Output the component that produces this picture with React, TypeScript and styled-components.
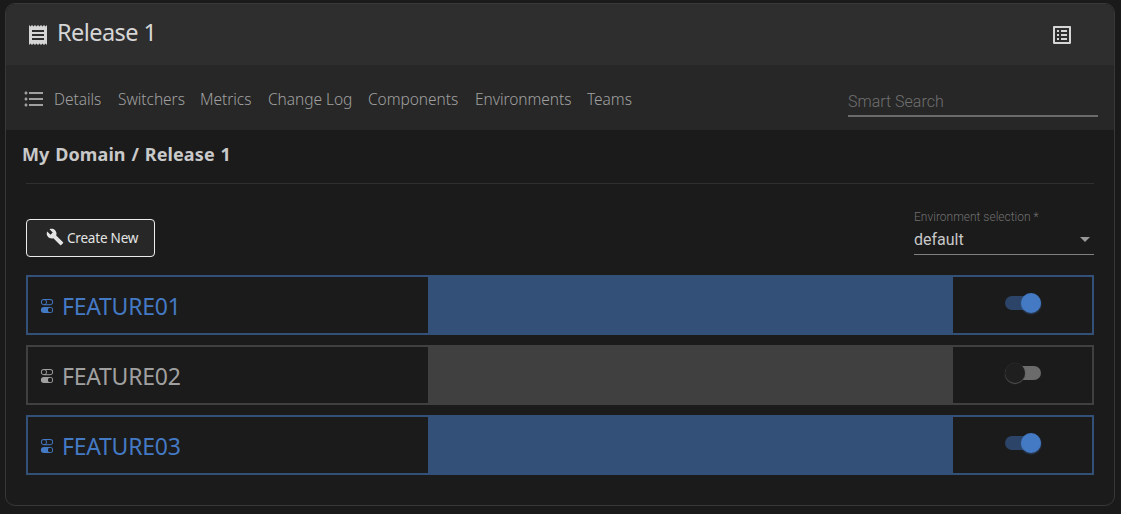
import React, { useState } from "react";
import styled, { createGlobalStyle } from "styled-components";
import { MdBuild, MdFormatListBulleted, MdListAlt, MdReceipt } from "react-icons/md";
import { BsToggles } from "react-icons/bs";

const GlobalStyle = createGlobalStyle`
  * { box-sizing: border-box; }
  body {
    margin: 0;
    background: #1a1a1a;
    font-family: "Segoe UI", "Noto Sans", "Open Sans", sans-serif;
    overflow: hidden;
  }
`;

const Card = styled.main`
  width: 1110px;
  height: 503px;
  margin: 3px 0 0 5px;
  border: 1px solid #383838;
  border-radius: 10px;
  background: #1b1b1b;
  overflow: hidden;
`;

const Header = styled.header`
  display: flex;
  align-items: center;
  height: 61px;
  padding: 1px 40px 0 20px;
  background: #2e2e2e;
  color: #d6d6d6;
  svg { display: block; }
`;

const Title = styled.h1`
  flex: 1;
  margin: 0 0 7px 7px;
  font-size: 23.5px;
  line-height: 32px;
  font-weight: 400;
  letter-spacing: -0.55px;
`;

const NavBar = styled.nav`
  display: flex;
  align-items: center;
  height: 65px;
  padding: 1px 16px 0 16px;
  background: #272727;
  color: #a0a0a0;
  svg { margin-top: 1px; }
`;

const Links = styled.div`
  display: flex;
  flex: 1;
  margin-left: 8px;
  padding-top: 1px;
`;

const NavLink = styled.a<{ $width: number }>`
  width: ${(p) => p.$width}px;
  font-size: 15.5px;
  line-height: 24px;
  font-weight: 300;
  letter-spacing: -0.05px;
  white-space: nowrap;
`;

const Search = styled.input`
  width: 250px;
  height: 32px;
  margin-top: 6px;
  padding: 3px 0 0;
  border: 0;
  border-bottom: 2px solid #6b6b6b;
  outline: 0;
  background: transparent;
  color: #ccc;
  font: 300 16px Roboto, sans-serif;
  &::placeholder { color: #707070; opacity: 1; }
`;

const Breadcrumb = styled.h2`
  height: 54px;
  margin: 0 20px;
  padding-top: 11px;
  border-bottom: 1px solid #303030;
  color: #c9c9c9;
  font-size: 18px;
  line-height: 26px;
  font-weight: 700;
  letter-spacing: 0.1px;
  word-spacing: 1px;
  text-indent: -4px;
`;

const Toolbar = styled.div`
  display: flex;
  justify-content: space-between;
  height: 91px;
  padding: 26px 20px 0;
`;

const CreateButton = styled.button`
  display: flex;
  align-items: center;
  width: 129px;
  height: 38px;
  margin-top: 9px;
  padding: 0 0 0 19px;
  border: 1px solid #ececec;
  border-radius: 4px;
  background: #272727;
  color: #e4e4e4;
  font-family: inherit;
  font-size: 13.5px;
  font-weight: 400;
  letter-spacing: -0.2px;
  white-space: nowrap;
  svg { margin: -3px 3px 0 0; }
`;

const Field = styled.label`
  display: flex;
  flex-direction: column;
  width: 180px;
  height: 45px;
  border-bottom: 1px solid #808080;
  font-family: Roboto, sans-serif;
`;

const FieldLabel = styled.span`
  color: #707070;
  font-size: 12px;
  line-height: 14px;
  font-weight: 300;
`;

const FieldValue = styled.span`
  display: flex;
  align-items: center;
  justify-content: space-between;
  padding: 5px 4px 0 0;
  color: #c8c8c8;
  font-size: 16px;
  line-height: 22px;
`;

const Caret = styled.i`
  margin-bottom: 1px;
  border: 5px solid transparent;
  border-top-color: #999;
  border-bottom: 0;
`;

const List = styled.section`
  display: grid;
  gap: 10px;
  padding: 0 20px;
`;

const Row = styled.article<{ $on: boolean }>`
  display: grid;
  grid-template-columns: 400px 525px 1fr;
  height: 60px;
  border: 2px solid ${(p) => (p.$on ? "#335078" : "#404040")};
`;

const Name = styled.div<{ $on: boolean }>`
  display: flex;
  align-items: center;
  gap: 8px;
  padding: 1px 0 0 12px;
  color: ${(p) => (p.$on ? "#4479c4" : "#a0a0a0")};
  font-size: 23px;
  font-weight: 400;
  letter-spacing: -0.25px;
`;

const Fill = styled.div<{ $on: boolean }>`
  background: ${(p) => (p.$on ? "#335078" : "#404040")};
`;

const SwitchCell = styled.div`
  display: flex;
  justify-content: center;
  padding: 19px 0 0 1px;
`;

const Track = styled.button<{ $on: boolean }>`
  display: flex;
  align-items: center;
  justify-content: ${(p) => (p.$on ? "flex-end" : "flex-start")};
  width: 36px;
  height: 14px;
  padding: 0;
  border: 0;
  border-radius: 7px;
  background: ${(p) => (p.$on ? "#2b4468" : "#6b6b6b")};
`;

const Thumb = styled.span<{ $on: boolean }>`
  flex: none;
  width: 20px;
  height: 20px;
  border-radius: 50%;
  background: ${(p) => (p.$on ? "#4479c4" : "#1f1f1f")};
  box-shadow: ${(p) =>
    p.$on ? "0 1px 2px rgba(68, 121, 196, 0.5)" : "0 1px 1px #555, 0 0 1px #444"};
`;

const links = [
  { text: "Details", width: 64 },
  { text: "Switchers", width: 82 },
  { text: "Metrics", width: 68 },
  { text: "Change Log", width: 100 },
  { text: "Components", width: 107 },
  { text: "Environments", width: 112 },
  { text: "Teams", width: 60 },
];

export default function App() {
  const [features, setFeatures] = useState([
    { name: "FEATURE01", on: true },
    { name: "FEATURE02", on: false },
    { name: "FEATURE03", on: true },
  ]);
  const toggle = (name: string) =>
    setFeatures((all) => all.map((f) => (f.name === name ? { ...f, on: !f.on } : f)));

  return (
    <>
      <GlobalStyle />
      <Card>
        <Header>
          <MdReceipt size={24} />
          <Title>Release 1</Title>
          <MdListAlt size={24} />
        </Header>
        <NavBar>
          <MdFormatListBulleted size={24} />
          <Links>
            {links.map((l) => (
              <NavLink key={l.text} $width={l.width}>{l.text}</NavLink>
            ))}
          </Links>
          <Search placeholder="Smart Search" />
        </NavBar>
        <Breadcrumb>My Domain / Release 1</Breadcrumb>
        <Toolbar>
          <CreateButton>
            <MdBuild size={18} />
            Create New
          </CreateButton>
          <Field>
            <FieldLabel>Environment selection *</FieldLabel>
            <FieldValue>
              default
              <Caret />
            </FieldValue>
          </Field>
        </Toolbar>
        <List>
          {features.map((f) => (
            <Row key={f.name} $on={f.on}>
              <Name $on={f.on}>
                <BsToggles size={14} />
                {f.name}
              </Name>
              <Fill $on={f.on} />
              <SwitchCell>
                <Track $on={f.on} onClick={() => toggle(f.name)}>
                  <Thumb $on={f.on} />
                </Track>
              </SwitchCell>
            </Row>
          ))}
        </List>
      </Card>
    </>
  );
}
